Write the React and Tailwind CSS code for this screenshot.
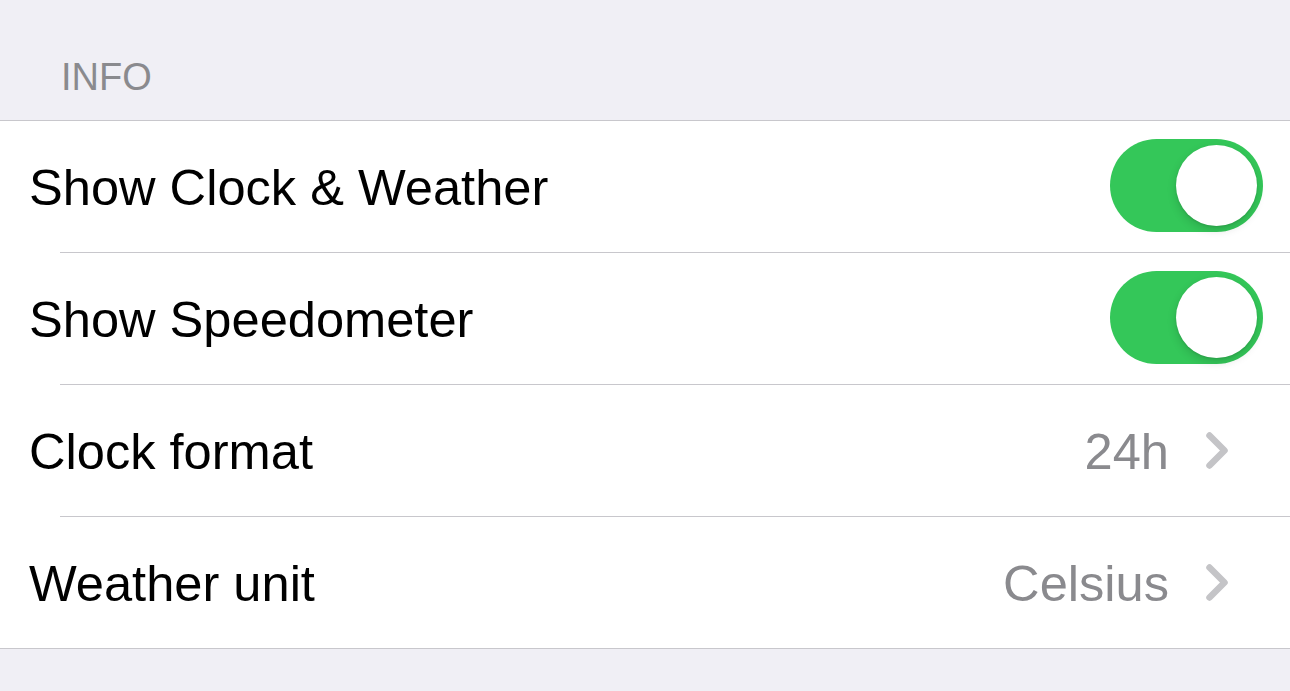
const FONT = { fontFamily: '"Liberation Sans", Arial, sans-serif' }

const ROWS = [
  { label: 'Show Clock & Weather', toggle: true },
  { label: 'Show Speedometer', toggle: true },
  { label: 'Clock format', value: '24h' },
  { label: 'Weather unit', value: 'Celsius' },
]

function Toggle() {
  return (
    <div className="w-[153px] h-[93px] rounded-full bg-[#34c759] flex items-center justify-end pr-[6px]">
      <div className="w-[81px] h-[81px] rounded-full bg-white shadow-[0_4px_10px_rgba(0,0,0,0.15),0_1px_2px_rgba(0,0,0,0.1)]" />
    </div>
  )
}

function Chevron() {
  return (
    <svg width="22" height="37" viewBox="0 0 22 37" className="shrink-0">
      <polyline
        points="3.5,3.5 18.5,18.5 3.5,33.5"
        fill="none"
        stroke="#c4c4c7"
        strokeWidth="6.5"
        strokeLinecap="round"
        strokeLinejoin="round"
      />
    </svg>
  )
}

export default function App() {
  return (
    <div className="min-h-screen bg-[#f0eff5]" style={FONT}>
      <div className="h-[120px] pl-[61px] pt-[56px]">
        <p className="text-[38px] leading-[42px] text-[#8a8a8e]">INFO</p>
      </div>
      <div className="bg-white border-y border-[#c8c7cc]">
        {ROWS.map((row, i) => (
          <div key={row.label}>
            <div className="h-[131px] flex items-center justify-between pl-[29px]">
              <span className="text-[50.6px] text-black leading-none pt-[3px]">{row.label}</span>
              {row.toggle ? (
                <div className="pr-[27px] -mt-[2px]">
                  <Toggle />
                </div>
              ) : (
                <div className="flex items-center gap-[37px] pr-[62px]">
                  <span className="text-[50.6px] text-[#8a8a8e] leading-none pt-[3px]">{row.value}</span>
                  <Chevron />
                </div>
              )}
            </div>
            {i < ROWS.length - 1 && <div className="ml-[60px] h-px bg-[#c8c7cc]" />}
          </div>
        ))}
      </div>
    </div>
  )
}
